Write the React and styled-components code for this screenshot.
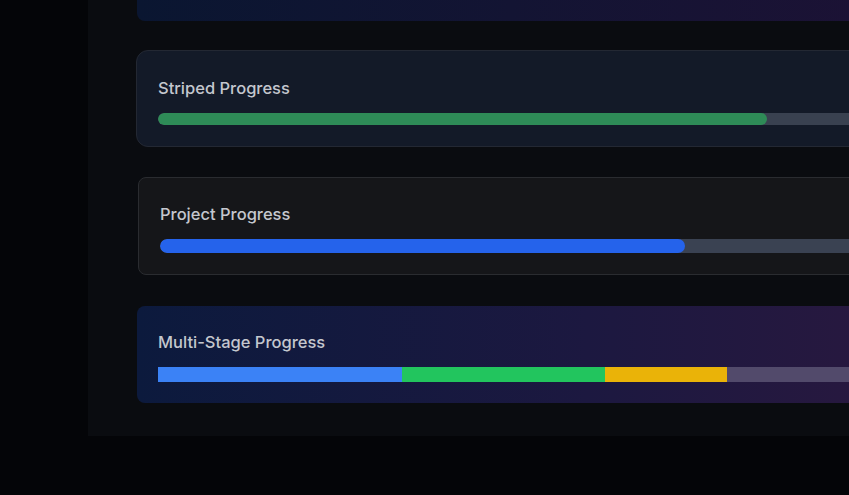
import React from "react";
import styled, { createGlobalStyle } from "styled-components";

const GlobalStyle = createGlobalStyle`
  html, body {
    margin: 0;
    padding: 0;
    background: #040508;
    overflow: hidden;
    font-family: Inter, "Noto Sans", sans-serif;
  }
`;

const Page = styled.div`
  min-height: 495px;
  padding-left: 88px;
`;

const Panel = styled.div`
  width: 1100px;
  margin-top: -117px;
  padding: 44px 0 33px 49px;
  background: #0a0c10;
  display: flex;
  flex-direction: column;
  gap: 29px;
`;

const Card = styled.div`
  width: 1000px;
  box-sizing: border-box;
  padding: ${(p) => p.$pt || 24}px 21px 21px;
  border-radius: ${(p) => p.$radius || 8}px;
  border: ${(p) => (p.$border ? `1px solid ${p.$border}` : "none")};
  background: ${(p) => p.$bg};
  margin-left: ${(p) => p.$shift || 0}px;
  margin-top: ${(p) => p.$mt || 0}px;
`;

const Title = styled.div`
  font-size: 16.5px;
  line-height: 24px;
  font-weight: 500;
  color: #c4c7ce;
  margin-bottom: 13px;
`;

const Track = styled.div`
  height: ${(p) => p.$h}px;
  border-radius: ${(p) => (p.$round ? 999 : 0)}px;
  background: ${(p) => p.$track};
  overflow: hidden;
  display: flex;
`;

const Fill = styled.div`
  height: 100%;
  border-radius: ${(p) => (p.$round ? 999 : 0)}px;
  background: ${(p) => p.$color};
  flex: none;
`;

const stages = [
  { color: "#3b82f6", w: 244 },
  { color: "#22c55e", w: 203 },
  { color: "#eab308", w: 122 },
];

export default function App() {
  return (
    <>
      <GlobalStyle />
      <Page>
        <Panel>
          <Card $bg="linear-gradient(90deg, #0a1631 0%, #1c1235 75%, #2a1640 100%)">
            <Title>Gradient Progress</Title>
            <Track $h={12} $round $track="#3a3548">
              <Fill $round $color="linear-gradient(90deg, #3b82f6, #8b3fd9)" style={{ width: "38%" }} />
            </Track>
          </Card>

          <Card $bg="#131a28" $border="#232833" $radius={12} $shift={-1} $pt={25}>
            <Title>Striped Progress</Title>
            <Track $h={12} $round $track="#394150">
              <Fill $round $color="#2e8b57" style={{ width: "63.7%" }} />
            </Track>
          </Card>

          <Card $bg="#151619" $border="#2a2c30" $shift={1} $mt={1}>
            <Title>Project Progress</Title>
            <Track $h={14} $round $track="#3a4252">
              <Fill $round $color="#2563eb" style={{ width: "54.9%" }} />
            </Track>
          </Card>

          <Card $bg="linear-gradient(90deg, #0c1a3d 0%, #1c1840 45%, #28183f 75%, #301a48 100%)" $mt={2}>
            <Title>Multi-Stage Progress</Title>
            <Track $h={15} $track="#524a6b">
              {stages.map((s) => (
                <Fill key={s.color} $color={s.color} style={{ width: s.w }} />
              ))}
            </Track>
          </Card>
        </Panel>
      </Page>
    </>
  );
}
